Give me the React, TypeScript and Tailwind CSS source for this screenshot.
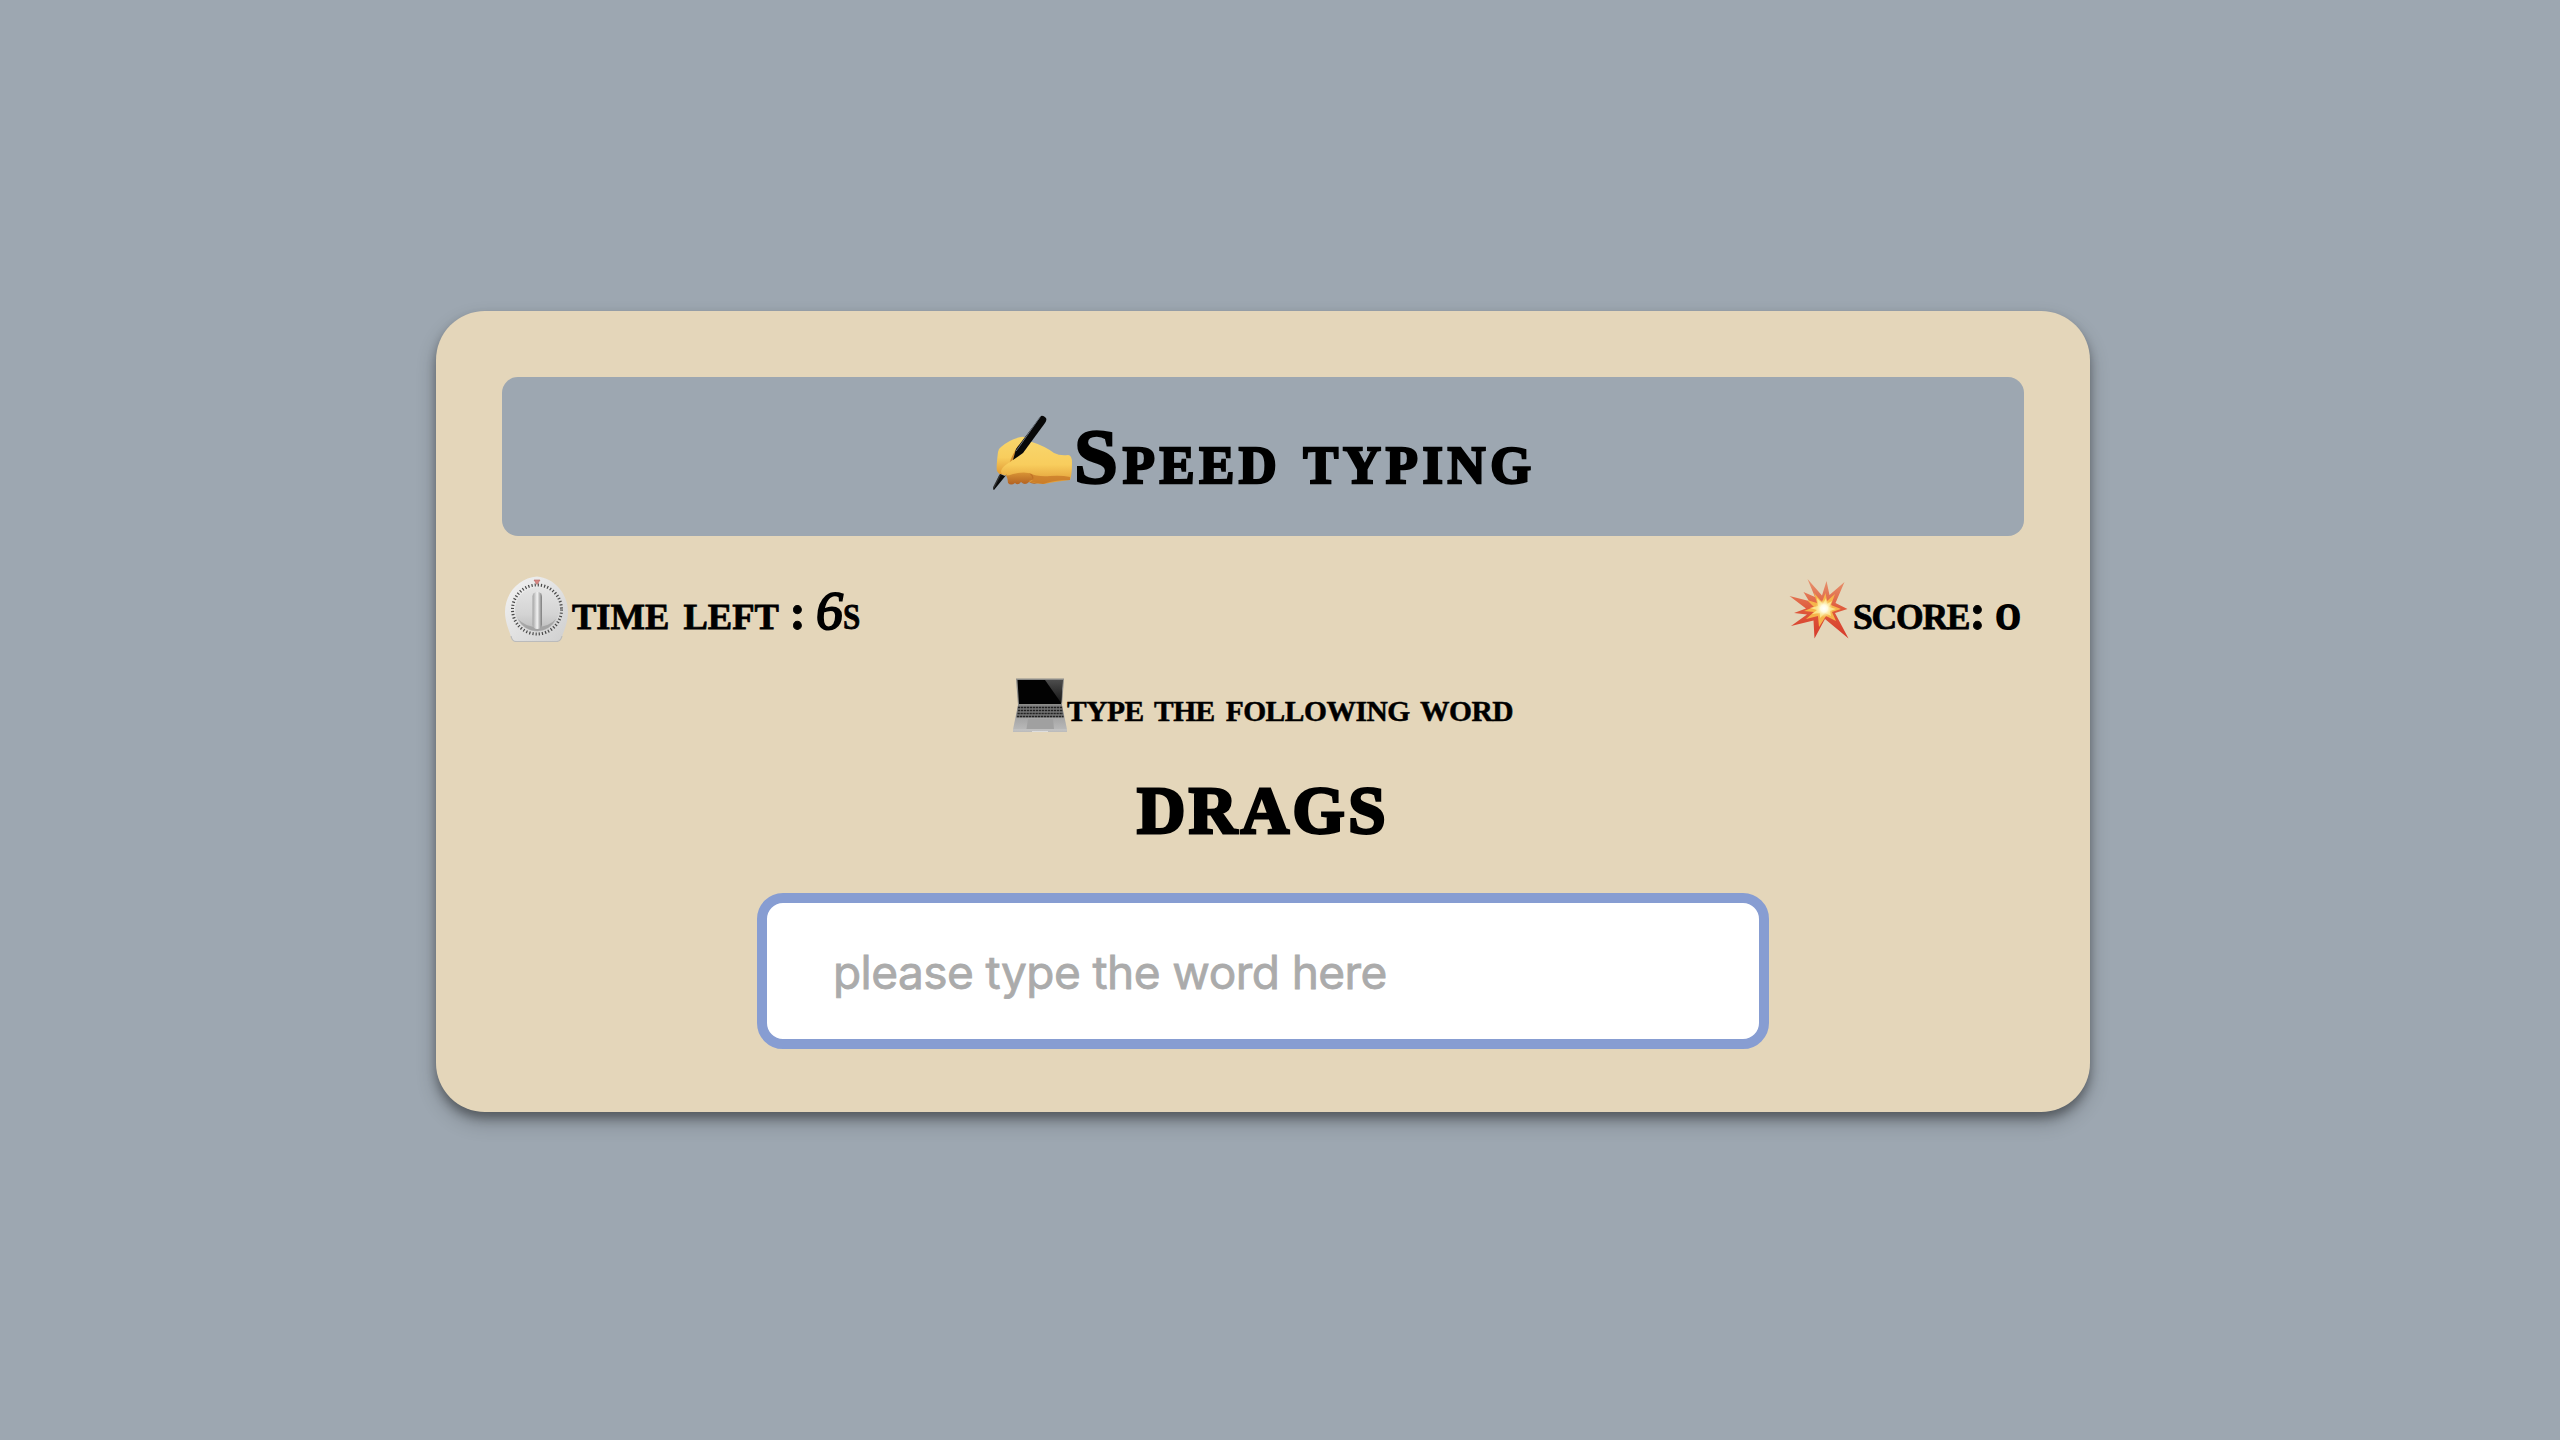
import React from "react";

function WritingHand() {
  return (
    <svg width="80" height="76" viewBox="0 0 80 76" className="shrink-0">
      <defs>
        <linearGradient id="skin" x1="0" y1="0" x2="0" y2="1">
          <stop offset="0" stopColor="#f8d66c" />
          <stop offset="0.55" stopColor="#f8cd5d" />
          <stop offset="1" stopColor="#e09a34" />
        </linearGradient>
        <linearGradient id="palm" x1="0" y1="0" x2="0" y2="1">
          <stop offset="0" stopColor="#e6a63c" />
          <stop offset="1" stopColor="#b26122" />
        </linearGradient>
      </defs>
      <path d="M13 56 L20 53 L42 56 L62 64 L45 68 Q40 70 36 67 Q32 71 28 67 Q25 71 22 68 Q18 71 15 68 Q15 64 13 60Z" fill="url(#palm)" />
      <path d="M28 22 Q31 21 35 24 L25 42 L15 56 Q8 63 4 56 Q3 53 5 37 Q5 34 8 32 Q17 24 28 22Z" fill="url(#skin)" />
      <path d="M25 31 L31 27 L22 47 L15 53 Q18 41 25 31Z" fill="#d18d2f" />
      <path d="M36 26 Q52 31 61 38 Q67 41 75 40 Q79 40 79 48 Q79 60 77 65 Q60 67 51 69 Q36 68 36 66 Q43 65 39 59 Q32 56 20 59 Q10 63 8 57 Q8 53 14 49 Q20 45 25 41 Q30 38 32 35Z" fill="url(#skin)" />
      <path d="M36 58 Q44 62 57 61 Q68 60 77 62 L77 65 Q61 65 50 69 L37 67 Q43 65 36 58Z" fill="#b9651f" opacity="0.55" />
      <path d="M48 1 Q50 0 53 3 Q54 5 52 8 L30 38 L20 45 L23 34Z" fill="#080808" />
      <path d="M47 2 L26 32 L23 36" stroke="#68707a" strokeWidth="1" fill="none" />
      <path d="M7 59 L12 61 L14 59 L1 75 L0 74Z" fill="#0a0a0a" />
      <path d="M7 60 L0 74" stroke="#333" strokeWidth="1.5" />
    </svg>
  );
}

function TimerClock() {
  return (
    <svg width="70" height="66" viewBox="0 0 70 66" className="shrink-0">
      <defs>
        <linearGradient id="clockBody" x1="0" y1="0" x2="1" y2="1">
          <stop offset="0" stopColor="#f4f4f4" />
          <stop offset="0.6" stopColor="#dedede" />
          <stop offset="1" stopColor="#cfcfcf" />
        </linearGradient>
        <linearGradient id="clockDial" x1="0" y1="0" x2="0" y2="1">
          <stop offset="0" stopColor="#e4e4e4" />
          <stop offset="0.6" stopColor="#d4d4d4" />
          <stop offset="1" stopColor="#bcbcbc" />
        </linearGradient>
        <linearGradient id="clockKnob" x1="0" y1="0" x2="1" y2="0">
          <stop offset="0" stopColor="#a2a2a2" />
          <stop offset="0.5" stopColor="#f2f2f2" />
          <stop offset="1" stopColor="#7c7c7c" />
        </linearGradient>
      </defs>
      <path d="M35 0.5 C52 2 66 17 66 36 C66 47 61 57 60 61 Q59 65 55 65.5 L14 65.5 Q10 65 9 61 C8 56 3 47 3 36 C3 17 17 2 35 0.5Z" fill="url(#clockBody)" />
      <path d="M9 60 Q10 65.5 14 65.5 L55 65.5 Q59 65 60 60" stroke="#bbb" strokeWidth="1.2" fill="none" />
      <circle cx="35" cy="33.5" r="22" fill="url(#clockDial)" />
      <circle cx="35" cy="33.5" r="24.5" fill="none" stroke="#4a4a4a" strokeWidth="3" strokeDasharray="1.2 2.008" />
      <path d="M16 43 A21 21 0 0 0 54 43 A26 26 0 0 1 16 43Z" fill="#8d8d8d" opacity="0.55" />
      <rect x="30.5" y="16" width="9.5" height="37" rx="4.5" fill="url(#clockKnob)" />
      <path d="M32 4 L38 4 L35 8.5Z" fill="#d98783" stroke="#b6605c" strokeWidth="0.6" />
    </svg>
  );
}

function Collision() {
  return (
    <svg width="60" height="60" viewBox="0 0 60 60" className="shrink-0">
      <defs>
        <linearGradient id="blast" x1="0" y1="0" x2="0" y2="1">
          <stop offset="0" stopColor="#e79570" />
          <stop offset="0.5" stopColor="#df5a3c" />
          <stop offset="1" stopColor="#d63a2b" />
        </linearGradient>
        <radialGradient id="flash">
          <stop offset="0" stopColor="#fff" />
          <stop offset="0.4" stopColor="#fffbe0" />
          <stop offset="1" stopColor="#fbe28a" stopOpacity="0" />
        </radialGradient>
      </defs>
      <path d="M18.500 0 L33 16.500 L37.500 2 L40.500 16 L55.500 3 L46.500 24 L58.500 30 L46 34 L59.500 59.500 L36 40 L25.500 59.500 L24.500 41.500 L2 47 L18 35.500 L5 34 L17 29.500 L0.500 17 L20 22 L14.500 13 L26 18Z" fill="url(#blast)" />
      <path d="M25 14 L33 23 L36.500 14 L38 22 L46 15 L42 26 L52 30 L43 33 L47 42 L37 37 L30 48 L29 37 L17 40 L25 33 L15 32 L25 28 L18 21 L28 24Z" fill="#f6b54b" />
      <path d="M28 19 L34 25 L37 19 L38 25 L43 22 L40 28 L47 30 L41 32 L42 37 L36 34 L31 39 L31 34 L23 35 L28 31 L21 29 L29 27Z" fill="#fbe38a" />
      <circle cx="35" cy="29.500" r="9" fill="url(#flash)" />
    </svg>
  );
}

function Laptop() {
  return (
    <svg width="54" height="55" viewBox="0 0 54 55" className="shrink-0">
      <defs>
        <linearGradient id="glare" x1="0" y1="0" x2="0" y2="1">
          <stop offset="0" stopColor="#4c4c4c" />
          <stop offset="1" stopColor="#161616" />
        </linearGradient>
        <linearGradient id="deck" x1="0" y1="0" x2="0" y2="1">
          <stop offset="0" stopColor="#8f8f8f" />
          <stop offset="1" stopColor="#bdbdbd" />
        </linearGradient>
      </defs>
      <path d="M3 0.500 L51 0.500 L49 27 L5 27Z" fill="#8b8b88" />
      <path d="M4.500 2 L49.500 2 L48 26 L6 26Z" fill="#020202" />
      <path d="M32 2 L49.500 2 L48.200 25Z" fill="url(#glare)" />
      <path d="M5 27 L49 27 L54 51.500 L54 54 L0 54 L0 51.500Z" fill="url(#deck)" />
      <path d="M5 27.500 L49 27.500 L51 39.500 L3 39.500Z" fill="#777" />
      <path d="M5 29.500 H49 M5 32.500 H49.500 M4.500 35.500 H50 M4 38.500 H50.500" stroke="#222" strokeWidth="1.700" strokeDasharray="2.300 0.700" />
      <path d="M15 41 L40 41 L41 51 L13.500 51Z" fill="#a0a0a0" />
      <path d="M0 52 H54" stroke="#ccc" strokeWidth="0.800" />
      <path d="M19 53.500 H35" stroke="#ddd" strokeWidth="1" />
    </svg>
  );
}

export default function App() {
  return (
    <div className="h-[1440px] w-[2560px] overflow-hidden bg-[#9da7b1] pt-[311px] pl-[436px] text-black">
      <main className="flex h-[801px] w-[1654px] flex-col items-center rounded-[49px] bg-[#e4d6ba] px-[66px] pt-[66px] font-['Liberation_Serif',serif] font-bold shadow-[0_10px_20px_rgba(0,0,0,0.24),0_6px_10px_rgba(0,0,0,0.3)]">
        <header className="flex h-[159px] w-full rounded-[16px] bg-[#9da7b1] pl-[491px]">
          <div className="mt-[38px]">
            <WritingHand />
          </div>
          <h1 className="mt-[58px] ml-[1px] text-[52.5px] leading-[60px] tracking-[4.7px] [word-spacing:5px] whitespace-nowrap uppercase [-webkit-text-stroke:2.4px_black] first-letter:text-[79px] first-letter:leading-[0px]">
            Speed typing
          </h1>
        </header>

        <section className="mt-[40px] flex h-[80px] w-full items-start justify-between text-[36.5px] leading-[82px] whitespace-nowrap uppercase [-webkit-text-stroke:0.8px_black]">
          <div className="flex">
            <TimerClock />
            <p className="[word-spacing:5px]">
              time left <span className="-ml-[3px] text-[50px] leading-[0px]">:</span>{" "}
              <span className="-ml-[4px] inline-block text-[54px] leading-[0px] font-normal italic [-webkit-text-stroke:2px_black]">6</span>
              <span className="inline-block origin-left scale-x-[0.85]">s</span>
            </p>
          </div>
          <div className="flex">
            <div className="mt-[3px] mr-[4px]">
              <Collision />
            </div>
            <p className="w-[171px]">
              <span className="text-[35.5px] tracking-[-1.2px]">score</span>
              <span className="text-[50px] leading-[0px]">:</span>{" "}
              <span className="ml-[4px] inline-block scale-x-[1.35] font-normal leading-[0px] [-webkit-text-stroke:2px_black]">0</span>
            </p>
          </div>
        </section>

        <div className="mt-[22px] flex h-[60px] text-[29.5px] leading-[67px] tracking-[-0.5px] [word-spacing:4px] whitespace-nowrap uppercase [-webkit-text-stroke:0.5px_black]">
          <Laptop />
          <p>type the following word</p>
        </div>

        <h2 className="mt-[32px] text-[67px] leading-[80px] tracking-[3.5px] uppercase [-webkit-text-stroke:3px_black]">drags</h2>

        <input
          className="mt-[43px] h-[156px] w-[1012px] rounded-[26px] border-[10px] border-[#879dd2] bg-white pt-[2px] pr-[20px] pl-[66px] font-['Inter',sans-serif] text-[46px] font-normal tracking-[-0.55px] outline-none [-webkit-text-stroke:0.8px_#ababab] placeholder:text-[#ababab]"
          placeholder="please type the word here"
        />
      </main>
    </div>
  );
}
